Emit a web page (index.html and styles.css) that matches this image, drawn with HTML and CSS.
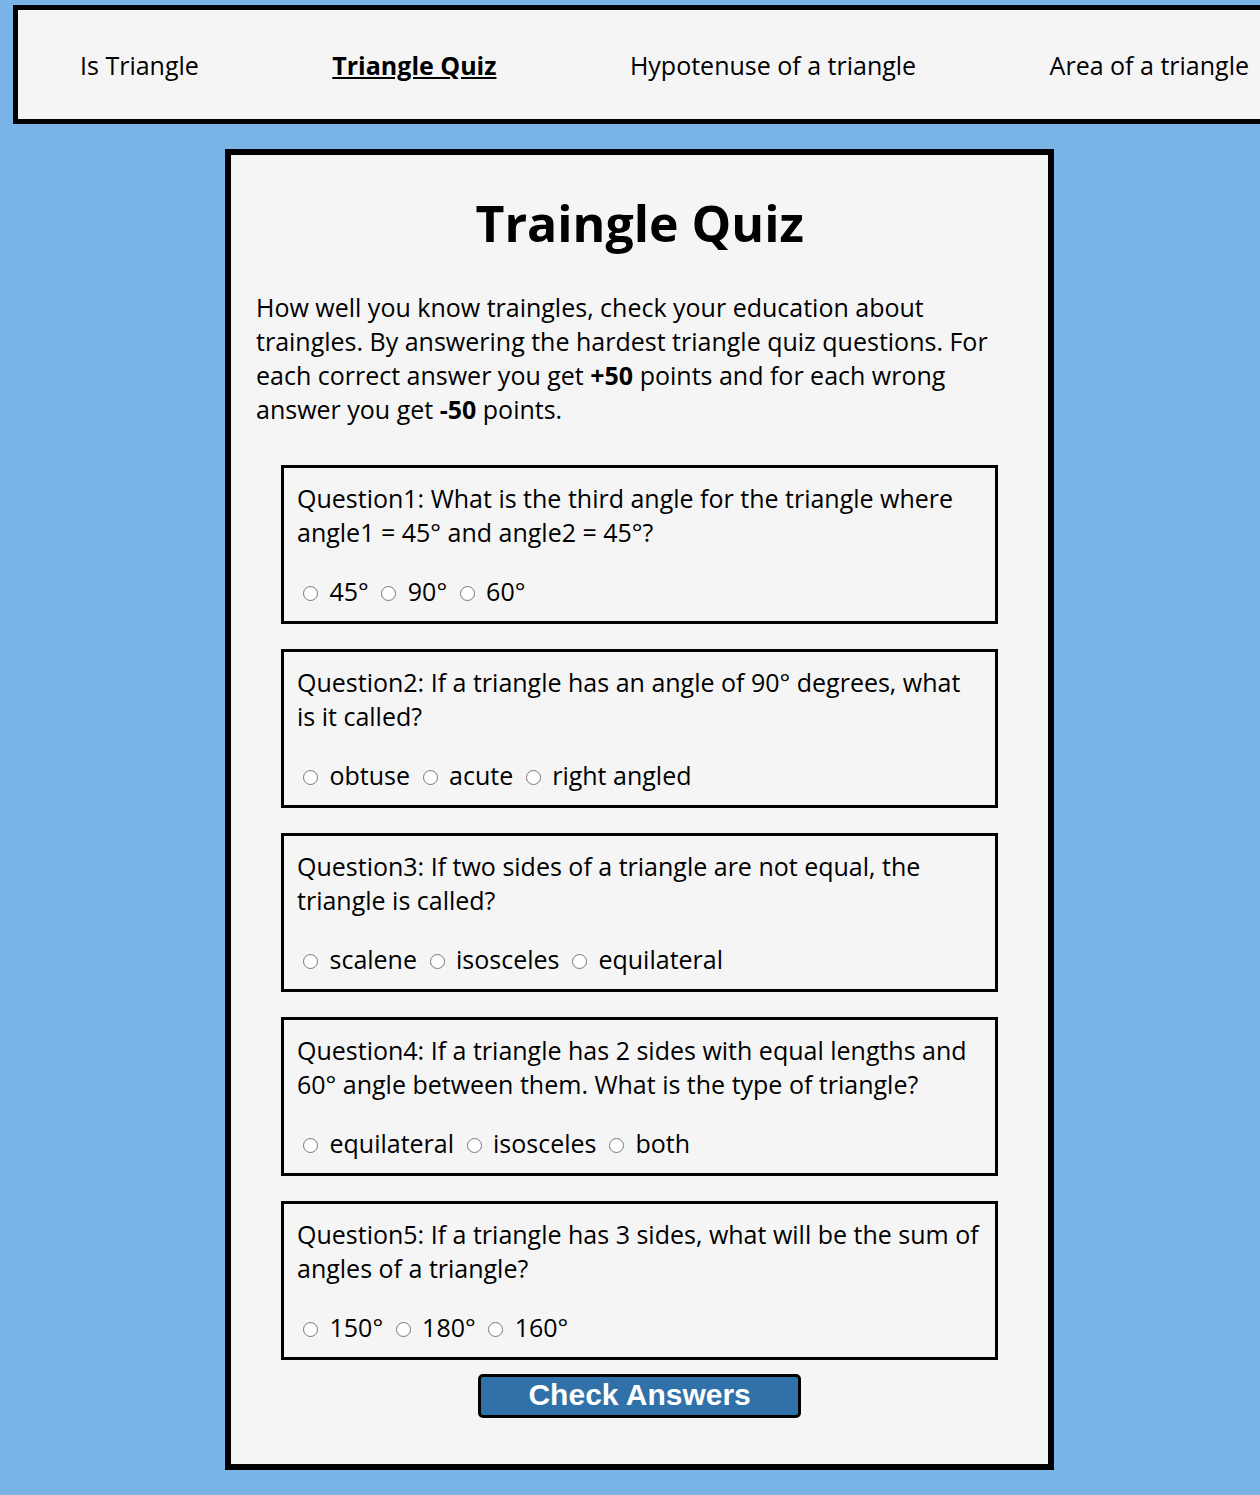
FILE: index.html
```html
<!DOCTYPE html>
<html lang="en">
<head>
<meta charset="utf-8">
<meta name="viewport" content="width=device-width, initial-scale=1">
<title>Triangle Quiz</title>
<link rel="stylesheet" href="styles.css">
</head>
<body>
<nav class="navbar">
  <a class="nav-link" href="#is-triangle">Is Triangle</a>
  <a class="nav-link active" href="#quiz">Triangle Quiz</a>
  <a class="nav-link" href="#hypotenuse">Hypotenuse of a triangle</a>
  <a class="nav-link" href="#area">Area of a triangle</a>
</nav>
<main class="container" id="quiz">
  <h1 class="title">Traingle Quiz</h1>
  <p class="intro">How well you know traingles, check your education about traingles. By answering the hardest triangle quiz questions. For each correct answer you get <strong>+50</strong> points and for each wrong answer you get <strong>-50</strong> points.</p>
  <form class="quiz-form">
    <div class="question">
      <p class="question-text">Question1: What is the third angle for the triangle where angle1 = 45° and angle2 = 45°?</p>
      <div class="options">
        <label><input type="radio" name="question1" value="45"> 45°</label>
        <label><input type="radio" name="question1" value="90"> 90°</label>
        <label><input type="radio" name="question1" value="60"> 60°</label>
      </div>
    </div>
    <div class="question">
      <p class="question-text">Question2: If a triangle has an angle of 90° degrees, what is it called?</p>
      <div class="options">
        <label><input type="radio" name="question2" value="obtuse"> obtuse</label>
        <label><input type="radio" name="question2" value="acute"> acute</label>
        <label><input type="radio" name="question2" value="right angled"> right angled</label>
      </div>
    </div>
    <div class="question">
      <p class="question-text">Question3: If two sides of a triangle are not equal, the triangle is called?</p>
      <div class="options">
        <label><input type="radio" name="question3" value="scalene"> scalene</label>
        <label><input type="radio" name="question3" value="isosceles"> isosceles</label>
        <label><input type="radio" name="question3" value="equilateral"> equilateral</label>
      </div>
    </div>
    <div class="question">
      <p class="question-text">Question4: If a triangle has 2 sides with equal lengths and 60° angle between them. What is the type of triangle?</p>
      <div class="options">
        <label><input type="radio" name="question4" value="equilateral"> equilateral</label>
        <label><input type="radio" name="question4" value="isosceles"> isosceles</label>
        <label><input type="radio" name="question4" value="both"> both</label>
      </div>
    </div>
    <div class="question">
      <p class="question-text">Question5: If a triangle has 3 sides, what will be the sum of angles of a triangle?</p>
      <div class="options">
        <label><input type="radio" name="question5" value="150"> 150°</label>
        <label><input type="radio" name="question5" value="180"> 180°</label>
        <label><input type="radio" name="question5" value="160"> 160°</label>
      </div>
    </div>
    <button class="submit" type="button">Check Answers</button>
  </form>
</main>
</body>
</html>
```
FILE: styles.css
```css
* {
  box-sizing: border-box;
}

html {
  overflow-x: hidden;
}

body {
  margin: 5px 0 25px 13px;
  background: #7ab4e7;
  color: #000;
  font-family: "Open Sans", sans-serif;
  font-size: 25px;
  line-height: 34px;
}

.navbar {
  display: flex;
  justify-content: space-between;
  width: calc(100% + 56px);
  padding: 38px 62px 37px;
  border: 5px solid #000;
  background: whitesmoke;
  white-space: nowrap;
}

.nav-link {
  color: inherit;
  text-decoration: none;
}

.nav-link.active {
  font-weight: 700;
  text-decoration: underline;
}

.container {
  width: 66.5%;
  margin: 25px 206px 0 212px;
  padding: 34px 25px 46px;
  border: 6px solid #000;
  background: whitesmoke;
}

.title {
  margin: 0 0 33px;
  font-size: 50px;
  line-height: 68px;
  text-align: center;
}

.intro {
  margin: 0 0 39px;
}

.quiz-form {
  display: flex;
  flex-direction: column;
  gap: 25px;
  padding: 0 25px;
}

.question {
  padding: 13px;
  border: 3px solid #000;
}

.question-text {
  margin: 0 0 25px;
}

.options input {
  width: 15px;
  height: 15px;
  margin: 0 5px 2px 6px;
}

.submit {
  align-self: center;
  margin-top: -11px;
  padding: 0 47px 2px;
  border: 3px solid #000;
  border-radius: 5px;
  background: #3071a9;
  color: #fff;
  font: bold 30px/36px "Liberation Sans", Arial, sans-serif;
}
```
